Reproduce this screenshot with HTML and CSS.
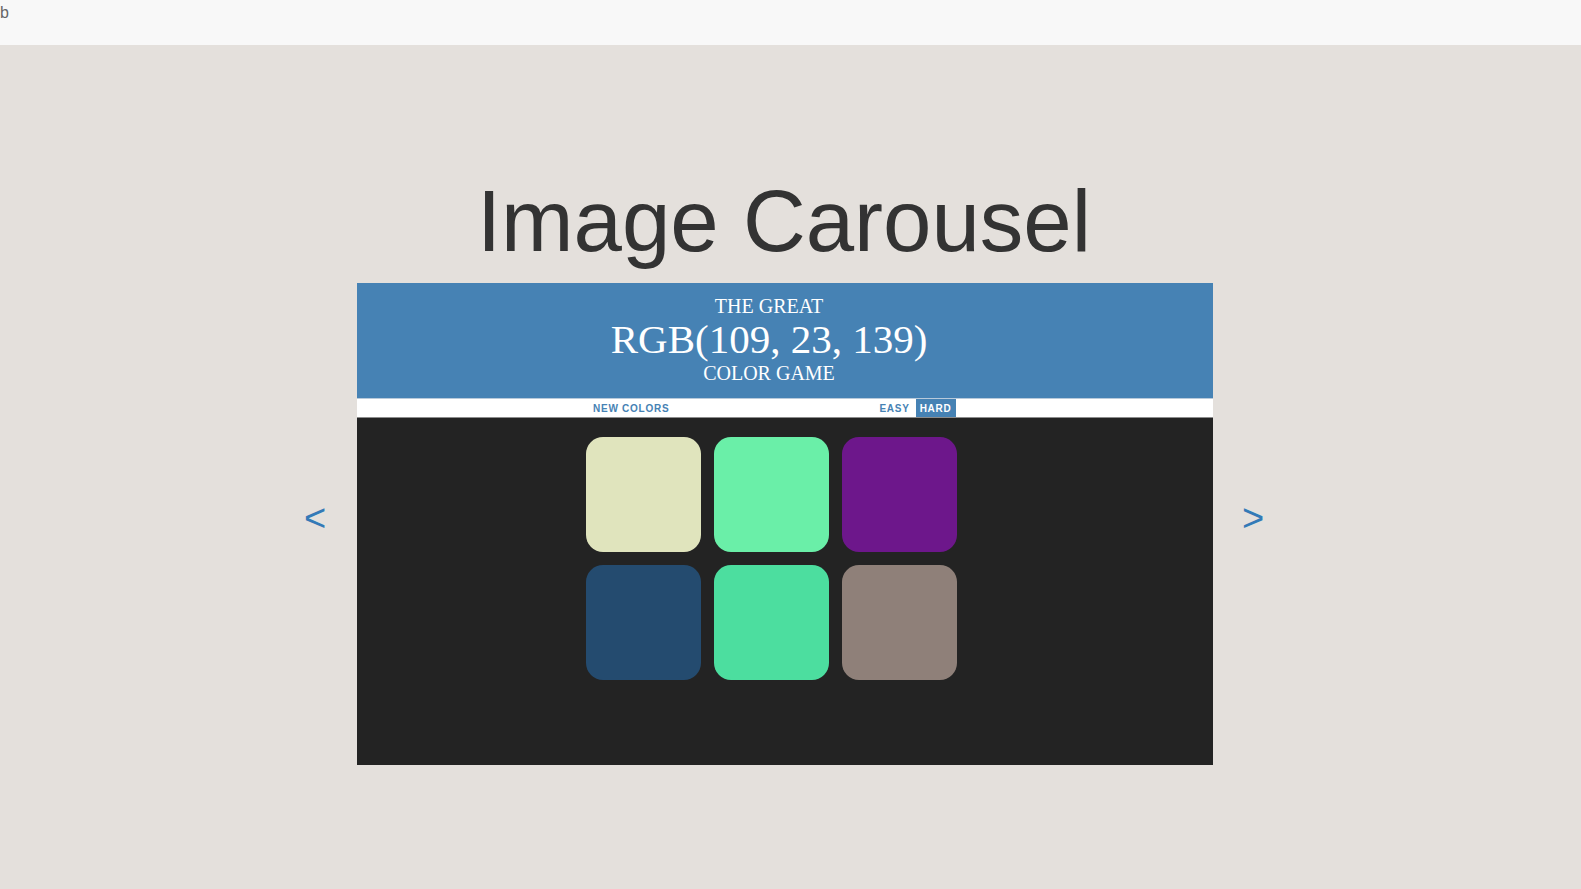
FILE: index.html
```html
<!DOCTYPE html>
<html lang="en">
<head>
<meta charset="utf-8">
<title>Image Carousel</title>
<link rel="stylesheet" href="styles.css">
</head>
<body>
<div class="topbar">b</div>
<main class="page">
  <h1 class="title">Image Carousel</h1>
  <div class="carousel">
    <button class="arrow arrow-prev" type="button">&lt;</button>
    <div class="slide">
      <header class="game-head">
        <div class="line-sm">THE GREAT</div>
        <div class="line-lg">RGB(109, 23, 139)</div>
        <div class="line-sm">COLOR GAME</div>
      </header>
      <div class="stripe">
        <span class="btn">NEW COLORS</span>
        <span class="message"></span>
        <span class="btn">EASY</span>
        <span class="btn selected">HARD</span>
      </div>
      <div class="board">
        <div class="grid">
          <div class="square" style="background:#e0e4bd"></div>
          <div class="square" style="background:#6aefa8"></div>
          <div class="square" style="background:#6d178b"></div>
          <div class="square" style="background:#244b6f"></div>
          <div class="square" style="background:#4cde9f"></div>
          <div class="square" style="background:#8f8079"></div>
        </div>
      </div>
    </div>
    <button class="arrow arrow-next" type="button">&gt;</button>
  </div>
</main>
</body>
</html>
```
FILE: styles.css
```css
html, body {
  margin: 0;
  padding: 0;
}
body {
  background: #e4e0dc;
  font-family: "Liberation Sans", Arial, sans-serif;
  width: 1581px;
  height: 889px;
  overflow: hidden;
}
.topbar {
  height: 41px;
  padding-top: 4px;
  background: #f8f8f8;
  color: #666;
  font-size: 16px;
  line-height: 18px;
}
.page {
  width: 1568px;
  padding-top: 126px;
}
.title {
  margin: 0 0 12px 0;
  text-align: center;
  font-family: "Liberation Sans", Arial, sans-serif;
  font-weight: normal;
  font-size: 87px;
  line-height: 100px;
  color: #333;
}
.carousel {
  display: flex;
  justify-content: center;
  align-items: center;
}
.arrow {
  border: none;
  background: none;
  padding: 0;
  width: 24px;
  font-family: "Liberation Sans", Arial, sans-serif;
  font-size: 38px;
  line-height: 40px;
  color: #337ab7;
  margin-top: -12px;
}
.arrow-prev {
  margin-right: 30px;
}
.arrow-next {
  margin-left: 28px;
}
.slide {
  width: 856px;
  height: 482px;
  background: #232323;
  display: flex;
  flex-direction: column;
}
.game-head {
  background: #4682b4;
  color: #fff;
  font-family: "Liberation Serif", "Times New Roman", serif;
  text-align: center;
  padding: 12px 32px 14px 0;
}
.line-sm {
  font-size: 20px;
  line-height: 22px;
}
.line-lg {
  font-size: 41px;
  line-height: 45px;
}
.stripe {
  background: #fff;
  height: 18px;
  border-top: 1px solid #b8cadb;
  border-bottom: 1px solid #8c8c8c;
  display: flex;
  padding-left: 232px;
}
.btn {
  display: flex;
  align-items: center;
  padding: 0 4px;
  height: 18px;
  font-size: 10px;
  font-weight: bold;
  letter-spacing: 0.75px;
  color: #4682b4;
}
.selected {
  background: #4682b4;
  color: #fff;
  margin-left: 2px;
}
.message {
  width: 202px;
}
.board {
  flex: 1;
}
.grid {
  margin: 19px 0 0 229px;
  display: grid;
  grid-template-columns: repeat(3, 115px);
  grid-auto-rows: 115px;
  gap: 13px;
}
.square {
  border-radius: 17px;
}
```
